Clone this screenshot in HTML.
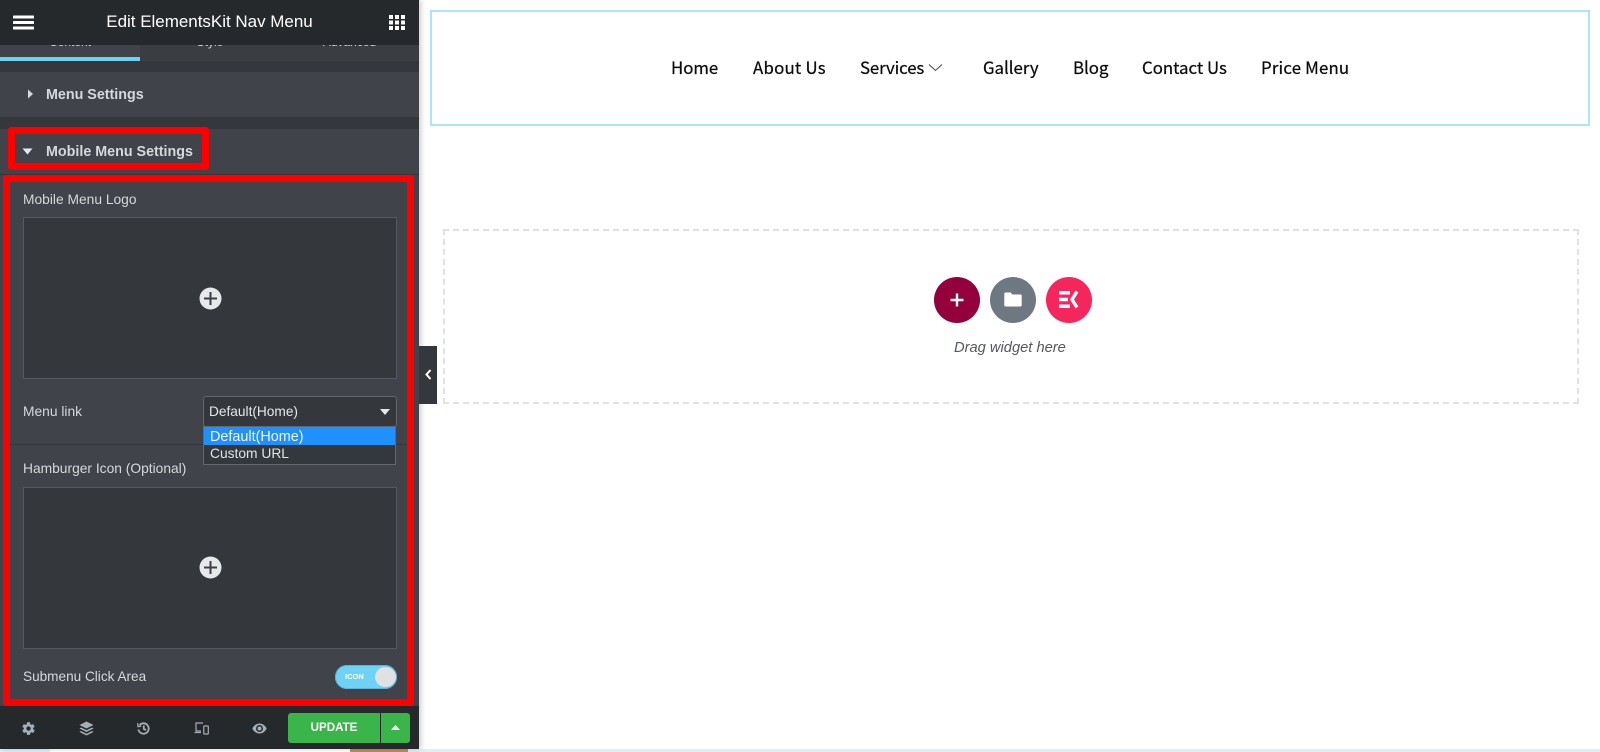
<!DOCTYPE html>
<html lang="en">
<head>
<meta charset="utf-8">
<title>Edit ElementsKit Nav Menu</title>
<style>
html,body{margin:0;padding:0;background:#fff;}
body{width:1600px;height:752px;overflow:hidden;position:relative;font-family:"Liberation Sans",sans-serif;}
.a{position:absolute;}
.t{position:absolute;white-space:nowrap;line-height:20px;height:20px;}
.nav{position:absolute;top:56px;line-height:22px;font-size:16.8px;color:#0c0c0c;white-space:nowrap;font-family:"Noto Sans CJK JP","Liberation Sans",sans-serif;-webkit-text-stroke:.25px #0c0c0c;}
.lbl{color:#d5d8dc;font-size:13.8px;}
.sec{color:#d5d8dc;font-size:14.3px;font-weight:bold;}
.box{position:absolute;left:23px;width:372px;background:#34383c;border:1px solid #565a60;}
.plus{position:absolute;left:199px;width:23px;height:23px;}
</style>
</head>
<body>
<!-- bottom strip -->
<div class="a" style="left:0;top:749px;width:1600px;height:3px;background:#dfeff5"></div>
<div class="a" style="left:50px;top:749px;width:300px;height:3px;background:#fff"></div>
<div class="a" style="left:350px;top:749px;width:58px;height:3px;background:#c08c5c"></div>

<!-- sidebar -->
<div class="a" style="left:0;top:0;width:419px;height:749px;background:#404349;box-shadow:2px 0 5px rgba(0,0,0,.2);overflow:hidden">
  <!-- tabs -->
  <div class="a" style="left:140px;top:45px;width:279px;height:16px;background:#3a3d42"></div>
  <div class="t" style="left:0;width:140px;text-align:center;top:32px;font-size:12px;color:#d5d8dc">Content</div>
  <div class="t" style="left:140px;width:140px;text-align:center;top:32px;font-size:12px;color:#d5d8dc">Style</div>
  <div class="t" style="left:280px;width:139px;text-align:center;top:32px;font-size:12px;color:#d5d8dc">Advanced</div>
  <div class="a" style="left:0;top:57px;width:140px;height:4px;background:#6ed2f5"></div>
  <!-- header -->
  <div class="a" style="left:0;top:0;width:419px;height:45px;background:#26292c"></div>
  <svg class="a" style="left:13px;top:15px" width="21" height="15" viewBox="0 0 21 15"><path d="M1 0.500h19a1 1 0 0 1 0 3H1a1 1 0 0 1 0-3zM1 6h19a1 1 0 0 1 0 3H1a1 1 0 0 1 0-3zM1 11.500h19a1 1 0 0 1 0 3H1a1 1 0 0 1 0-3z" fill="#fff"/></svg>
  <div class="t" style="left:0;width:419px;text-align:center;top:12px;font-size:17px;letter-spacing:-.02px;color:#fff">Edit ElementsKit Nav Menu</div>
  <svg class="a" style="left:389px;top:15px" width="16" height="15" viewBox="0 0 16 15" fill="#fff"><rect x="0" y="0" width="4" height="4"/><rect x="6" y="0" width="4" height="4"/><rect x="12" y="0" width="4" height="4"/><rect x="0" y="5.500" width="4" height="4"/><rect x="6" y="5.500" width="4" height="4"/><rect x="12" y="5.500" width="4" height="4"/><rect x="0" y="11" width="4" height="4"/><rect x="6" y="11" width="4" height="4"/><rect x="12" y="11" width="4" height="4"/></svg>
  <!-- section gaps -->
  <div class="a" style="left:0;top:61px;width:419px;height:11px;background:#34383c"></div>
  <div class="a" style="left:0;top:117px;width:419px;height:12px;background:#34383c"></div>
  <div class="a" style="left:0;top:174px;width:419px;height:1px;background:#34383c"></div>
  <!-- Menu settings -->
  <svg class="a" style="left:27px;top:89px" width="7" height="10" viewBox="0 0 7 10"><path d="M1 0.500L6 5L1 9.500z" fill="#d5d8dc"/></svg>
  <div class="t sec" style="left:46px;top:85px">Menu Settings</div>
  <!-- Mobile -->
  <svg class="a" style="left:22px;top:148px" width="11" height="7" viewBox="0 0 11 7"><path d="M0.500 0.500h10L5.500 6.500z" fill="#e6e8ea"/></svg>
  <div class="t sec" style="left:46px;top:142px">Mobile Menu Settings</div>
  <div class="t lbl" style="left:23px;top:190px">Mobile Menu Logo</div>
  <div class="box" style="top:217px;height:160px"></div>
  <svg class="plus" style="top:287px" viewBox="0 0 23 23"><circle cx="11.500" cy="11.500" r="11" fill="#e6e8ea"/><path d="M11.500 5v13M5 11.500h13" stroke="#3c4045" stroke-width="2"/></svg>
  <div class="t lbl" style="left:23px;top:402px">Menu link</div>
  <!-- select -->
  <div class="a" style="left:203px;top:396px;width:192px;height:29px;background:#34383c;border:1px solid #64676d;border-radius:3px"></div>
  <div class="t" style="left:209px;top:402px;font-size:13.7px;color:#e6e8ea">Default(Home)</div>
  <svg class="a" style="left:380px;top:409px" width="10" height="6" viewBox="0 0 10 6"><path d="M0 0h10L5 6z" fill="#e6e8ea"/></svg>
  <!-- divider -->
  <div class="a" style="left:10px;top:444px;width:398px;height:1px;background:#34383c"></div>
  <!-- dropdown -->
  <div class="a" style="left:203px;top:426px;width:191px;height:37px;background:#34383c;border:1px solid #64676d"></div>
  <div class="a" style="left:204px;top:427px;width:191px;height:18px;background:#1e90ff"></div>
  <div class="t" style="left:210px;top:427px;font-size:14.4px;color:#f2f5f8">Default(Home)</div>
  <div class="t" style="left:210px;top:444px;font-size:13.8px;color:#e0e2e5">Custom URL</div>
  <div class="t lbl" style="left:23px;top:459px">Hamburger Icon (Optional)</div>
  <div class="box" style="top:487px;height:160px"></div>
  <svg class="plus" style="top:556px" viewBox="0 0 23 23"><circle cx="11.500" cy="11.500" r="11" fill="#e6e8ea"/><path d="M11.500 5v13M5 11.500h13" stroke="#3c4045" stroke-width="2"/></svg>
  <div class="t lbl" style="left:23px;top:667px;font-size:13.6px">Submenu Click Area</div>
  <!-- toggle -->
  <div class="a" style="left:335px;top:665px;width:62px;height:24px;border-radius:12px;background:#6ed2f5;box-shadow:inset 0 0 0 1px #5db4d4"></div>
  <div class="t" style="left:345px;top:667px;font-size:7.500px;font-weight:bold;color:#fff">ICON</div>
  <div class="a" style="left:375px;top:667px;width:21px;height:20px;border-radius:50%;background:#dfe1e3"></div>
  <!-- red boxes -->
  <div class="a" style="left:8px;top:127px;width:201px;height:43px;box-sizing:border-box;border:7px solid #fe0000;border-radius:3px"></div>
  <div class="a" style="left:3px;top:175px;width:411px;height:531px;box-sizing:border-box;border:7px solid #fe0000;border-radius:3px"></div>
  <!-- footer -->
  <div class="a" style="left:0;top:706px;width:419px;height:43px;background:#26292c"></div>
  <svg class="a" style="left:21px;top:721px" width="15" height="15" viewBox="0 0 24 24"><path fill="#a4afb7" d="M19.400 13a7.700 7.700 0 0 0 0-2l2.500-1.900-2.400-4.200-3 1.200a7.400 7.400 0 0 0-1.700-1L14.400 1.900H9.600L9.200 5.100a7.400 7.400 0 0 0-1.700 1l-3-1.200-2.400 4.200L4.600 11a7.700 7.700 0 0 0 0 2l-2.500 1.900 2.400 4.200 3-1.200a7.400 7.400 0 0 0 1.700 1l.4 3.200h4.800l.4-3.200a7.400 7.400 0 0 0 1.700-1l3 1.200 2.400-4.200zM12 15.500a3.500 3.500 0 1 1 0-7 3.500 3.500 0 0 1 0 7z"/></svg>
  <svg class="a" style="left:79px;top:721px" width="15" height="15" viewBox="0 0 15 15" fill="#a4afb7"><path d="M7.500 0.500L14.500 4L7.500 7.500L0.500 4z"/><path d="M2 6.500L7.500 9.200L13 6.500L14.500 7.500L7.500 11L0.500 7.500z"/><path d="M2 10L7.500 12.700L13 10L14.500 11L7.500 14.500L0.500 11z"/></svg>
  <svg class="a" style="left:137px;top:722px" width="13" height="13" viewBox="0 0 13 13" fill="none" stroke="#a4afb7" stroke-width="1.800"><path d="M2.500 3.200A5.200 5.200 0 1 1 1.400 7.500"/><path d="M6.800 3.500v3.300l2.200 1.300"/><path d="M0.600 1.200l.4 3.400 3.300-.5" stroke-width="1.300"/></svg>
  <svg class="a" style="left:194px;top:722px" width="15" height="13" viewBox="0 0 15 13" fill="none" stroke="#a4afb7" stroke-width="1.200"><path d="M9 1H2v8h5"/><path d="M0.500 10.500H7"/><rect x="9.800" y="4" width="4.500" height="8" rx=".5"/></svg>
  <svg class="a" style="left:252px;top:723px" width="15" height="11" viewBox="0 0 15 11"><path fill="#a4afb7" d="M7.500 0.500C4 0.500 1.500 3 0.300 5.500 1.500 8 4 10.500 7.500 10.500S13.500 8 14.700 5.500C13.500 3 11 0.500 7.500 0.500zm0 8.500a3.500 3.500 0 1 1 0-7 3.500 3.500 0 0 1 0 7z"/><circle cx="7.500" cy="5.500" r="2" fill="#a4afb7"/></svg>
  <div class="a" style="left:288px;top:713px;width:92px;height:30px;background:#39b54a;border-radius:3px 0 0 3px"></div>
  <div class="t" style="left:288px;width:92px;text-align:center;top:718px;font-size:11.600px;font-weight:bold;color:#fff">UPDATE</div>
  <div class="a" style="left:381px;top:713px;width:29px;height:30px;background:#39b54a;border-radius:0 3px 3px 0"></div>
  <svg class="a" style="left:391px;top:725px" width="9" height="5" viewBox="0 0 9 5"><path d="M4.500 0L9 5H0z" fill="#fff"/></svg>
</div>

<!-- panel collapse handle -->
<div class="a" style="left:419px;top:346px;width:18px;height:58px;background:#34383c"></div>
<svg class="a" style="left:425px;top:369px" width="7" height="11" viewBox="0 0 7 11"><path d="M5.500 1L1.500 5.500L5.500 10" fill="none" stroke="#fff" stroke-width="2"/></svg>

<!-- nav box -->
<div class="a" style="left:430px;top:10px;width:1160px;height:116px;box-sizing:border-box;border:2px solid #a8e6f9"></div>
<div class="nav" style="left:671px">Home</div>
<div class="nav" style="left:753px;letter-spacing:.25px">About Us</div>
<div class="nav" style="left:860px;letter-spacing:-.1px">Services</div>
<svg class="a" style="left:928px;top:63px" width="15" height="9" viewBox="0 0 15 9"><path d="M1 1.500L7.500 7.500L14 1.500" fill="none" stroke="#444" stroke-width="1"/></svg>
<div class="nav" style="left:983px">Gallery</div>
<div class="nav" style="left:1073px">Blog</div>
<div class="nav" style="left:1142px">Contact Us</div>
<div class="nav" style="left:1261px;letter-spacing:.2px">Price Menu</div>

<!-- drop area -->
<div class="a" style="left:443px;top:229px;width:1136px;height:175px;box-sizing:border-box;border:2px dashed #e0e2e5"></div>
<div class="a" style="left:934px;top:277px;width:46px;height:46px;border-radius:50%;background:#93003c"></div>
<svg class="a" style="left:949px;top:292px" width="16" height="16" viewBox="0 0 16 16"><path d="M8 1.500v13M1.500 8h13" stroke="#fff" stroke-width="2.400"/></svg>
<div class="a" style="left:990px;top:277px;width:46px;height:46px;border-radius:50%;background:#6d7882"></div>
<svg class="a" style="left:1004px;top:292px" width="18" height="15" viewBox="0 0 18 15"><path d="M1.500 0.500h5l2 2h8a1.200 1.200 0 0 1 1.200 1.200v9.600a1.200 1.200 0 0 1-1.200 1.200h-15A1.200 1.200 0 0 1 .3 13.300V1.700A1.200 1.200 0 0 1 1.500 .5z" fill="#fff"/></svg>
<div class="a" style="left:1046px;top:277px;width:46px;height:46px;border-radius:50%;background:#f5265c"></div>
<svg class="a" style="left:1059px;top:290px" width="20" height="19" viewBox="0 0 20 19"><path d="M0 1h11v3.500H0zM0 7.800h9v3.500H0zM0 14.500h11V18H0z" fill="#fff"/><path d="M18 1.500L13 9.500L18 17.500" fill="none" stroke="#fff" stroke-width="3.400"/></svg>
<div class="t" style="left:954px;top:337.500px;font-size:14.700px;font-style:italic;color:#54595f">Drag widget here</div>
</body>
</html>
